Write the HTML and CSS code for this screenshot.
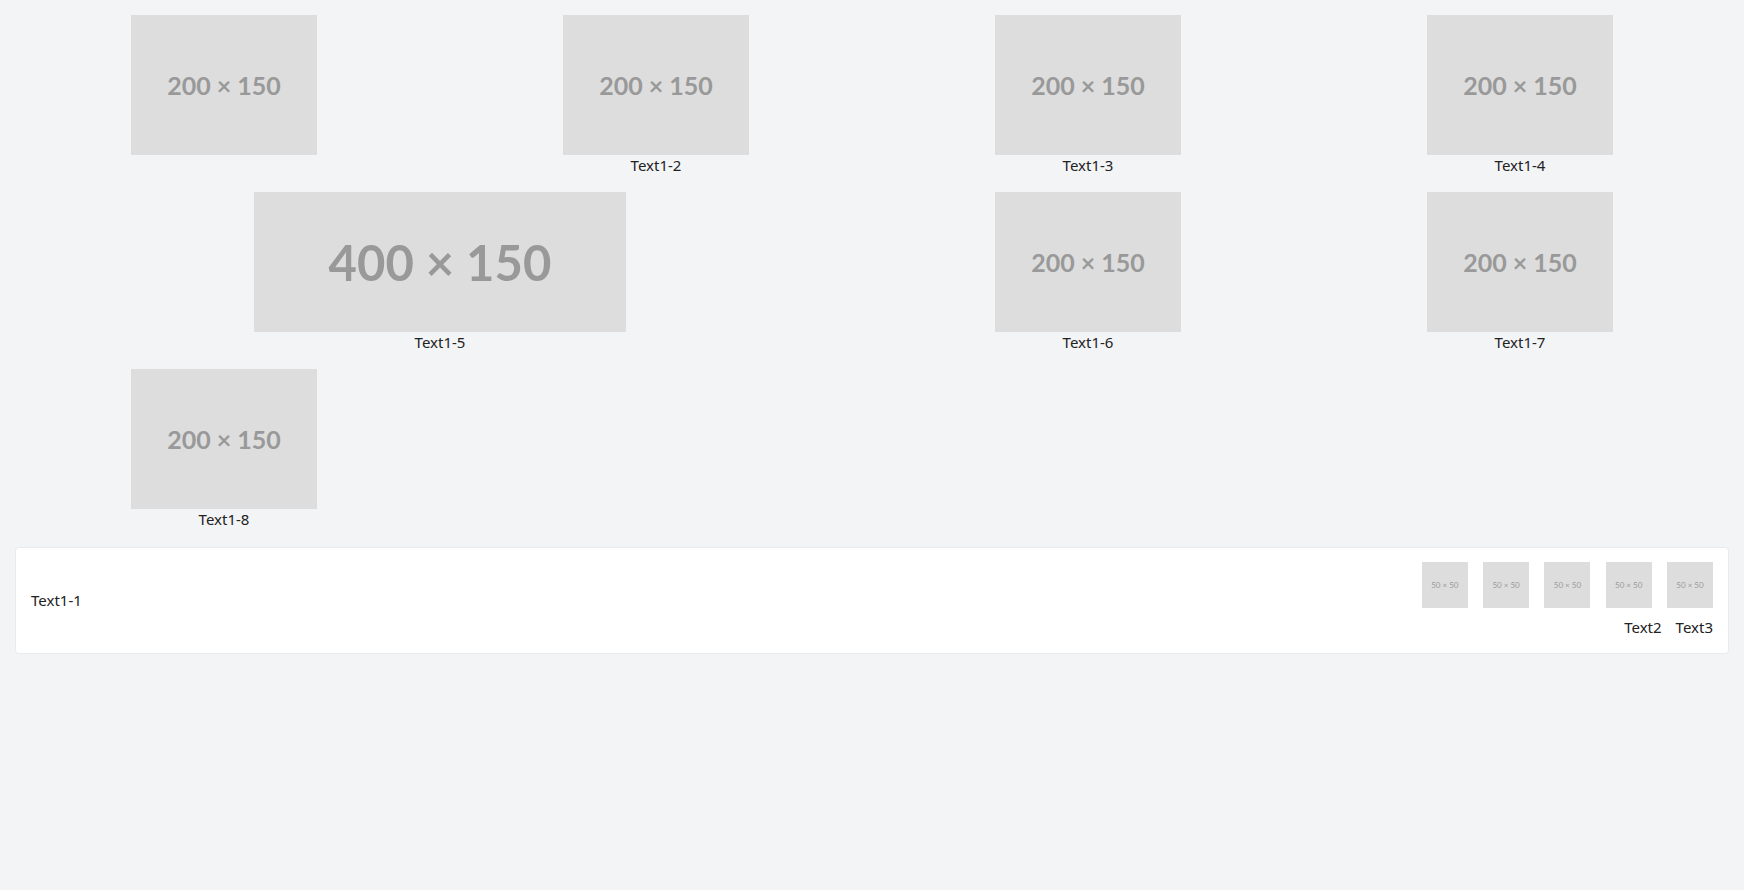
FILE: index.html
```html
<!DOCTYPE html>
<html>
<head>
<meta charset="utf-8">
<link rel="stylesheet" href="styles.css">
</head>
<body>
<div class="grid">
  <div class="cell"><div class="ph ph-200">200 × 150</div></div>
  <div class="cell"><div class="ph ph-200">200 × 150</div><div class="cap">Text1-2</div></div>
  <div class="cell"><div class="ph ph-200">200 × 150</div><div class="cap">Text1-3</div></div>
  <div class="cell"><div class="ph ph-200">200 × 150</div><div class="cap">Text1-4</div></div>
  <div class="cell span2"><div class="ph ph-400">400 × 150</div><div class="cap">Text1-5</div></div>
  <div class="cell"><div class="ph ph-200">200 × 150</div><div class="cap">Text1-6</div></div>
  <div class="cell"><div class="ph ph-200">200 × 150</div><div class="cap">Text1-7</div></div>
  <div class="cell"><div class="ph ph-200">200 × 150</div><div class="cap">Text1-8</div></div>
</div>
<div class="card">
  <div class="card-text">Text1-1</div>
  <div class="card-right">
    <div class="thumbs">
      <div class="thumb">50 × 50</div>
      <div class="thumb">50 × 50</div>
      <div class="thumb">50 × 50</div>
      <div class="thumb">50 × 50</div>
      <div class="thumb">50 × 50</div>
    </div>
    <div class="labels">
      <span>Text2</span>
      <span>Text3</span>
    </div>
  </div>
</div>
</body>
</html>
```
FILE: styles.css
```css
html, body {
  background: #f3f4f6;
}
body {
  margin: 8px;
  font-family: "Noto Sans", "Open Sans", sans-serif;
  font-size: 15px;
  line-height: 21px;
  color: #222;
}
.grid {
  display: grid;
  grid-template-columns: repeat(4, 1fr);
  row-gap: 16px;
  padding-top: 7px;
}
.cell {
  display: flex;
  flex-direction: column;
  align-items: center;
}
.span2 {
  grid-column: span 2;
}
.ph {
  background: #dddddd;
  color: #999999;
  font-family: Lato, "Noto Sans", sans-serif;
  font-weight: 700;
  display: flex;
  align-items: center;
  justify-content: center;
  height: 140px;
}
.ph-200 {
  width: 186px;
  font-size: 25px;
}
.ph-400 {
  width: 372px;
  font-size: 49px;
}
.cap {
  text-align: center;
}
.card {
  margin: 17px 7px 0;
  background: #ffffff;
  border: 1px solid #e9eaec;
  border-radius: 4px;
  padding: 14px 15px 15px;
  display: flex;
  justify-content: space-between;
  align-items: center;
}
.card-right {
  display: flex;
  flex-direction: column;
  align-items: flex-end;
}
.thumbs {
  display: flex;
  gap: 15.3px;
}
.thumb {
  width: 46px;
  height: 46px;
  background: #dddddd;
  color: #9a9a9a;
  font-family: Lato, "Noto Sans", sans-serif;
  font-size: 8px;
  display: flex;
  align-items: center;
  justify-content: center;
}
.labels {
  display: flex;
  gap: 14px;
  margin-top: 9px;
}
```
